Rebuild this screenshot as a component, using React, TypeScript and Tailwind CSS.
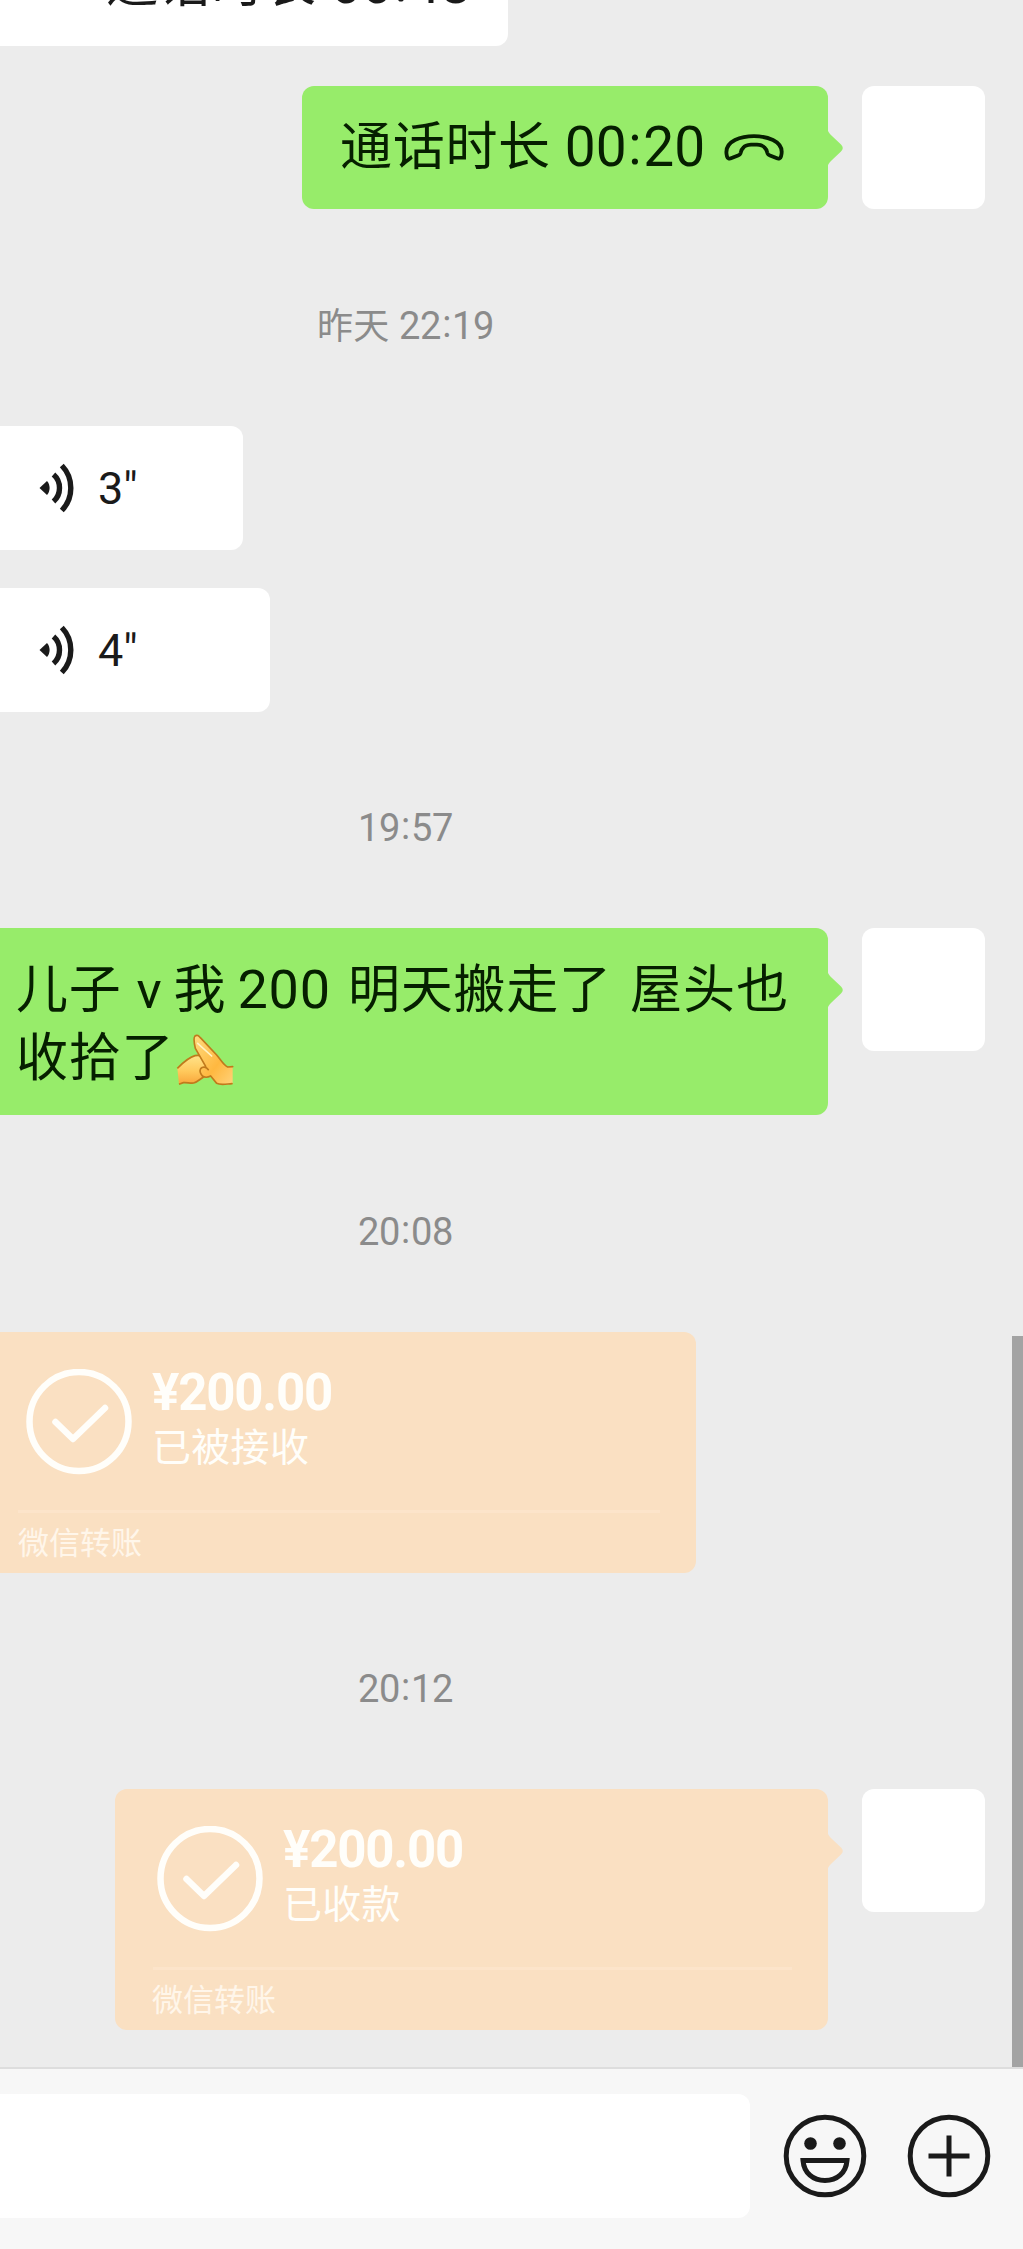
import type { ReactNode } from 'react'
import clsx from 'clsx'

function PhoneIcon() {
  return (
    <svg className="h-[27px] w-[60px] shrink-0" viewBox="0 0 60 27" fill="none">
      <path
        d="M3 22.5C1 15 4 9.500 11 6C22 .9 38 .9 49 6C56 9.500 59.200 15 57 22.500C56.500 24.500 54.500 25 53 24.300L46 21.500C44.500 21 43.500 20 43.200 18.500C42.800 16 42 14.800 40.500 13.500C39.500 12 37 11 33 10.700H27C23 11 20.500 12 19.500 13.500C18 14.800 17.200 16 16.800 18.500C16.500 20 15.500 21 14 21.500L7 24.300C5.500 25 3.500 24.500 3 22.500Z"
        stroke="currentColor"
        strokeWidth="3.8"
        strokeLinejoin="round"
      />
    </svg>
  )
}

function VoiceIcon() {
  return (
    <svg className="h-[50px] w-[36px] shrink-0" viewBox="0 0 36 50" fill="none">
      <path d="M.5 25L8 18C11.500 22 11.500 28 8 32Z" fill="currentColor" />
      <path d="M14.500 11.500C22.500 18.500 22.500 31.500 14.500 38.500" stroke="currentColor" strokeWidth="5.4" />
      <path d="M22.800 2.500C34.800 15 34.800 35 22.800 47.500" stroke="currentColor" strokeWidth="5.4" />
    </svg>
  )
}

function CheckIcon() {
  return (
    <svg className="h-[106px] w-[106px] shrink-0" viewBox="0 0 106 106" fill="none">
      <circle cx="53" cy="52.500" r="49.500" stroke="currentColor" strokeWidth="6.500" />
      <path d="M29.500 53L47 70L79 39" stroke="currentColor" strokeWidth="6.500" strokeLinejoin="round" strokeLinecap="round" />
    </svg>
  )
}

function HandsEmoji() {
  return (
    <svg className="ml-[2px] inline-block h-[52px] w-[58px] align-[-10px]" viewBox="35 36 174 156">
      <defs>
        <linearGradient id="skin" x1="0" y1="0" x2="0" y2="1">
          <stop offset="0" stopColor="#ffe38a" />
          <stop offset="0.55" stopColor="#ffc95c" />
          <stop offset="1" stopColor="#f9a53a" />
        </linearGradient>
        <linearGradient id="arm" x1="0" y1="0" x2="1" y2="1">
          <stop offset="0" stopColor="#ffdc80" />
          <stop offset="0.6" stopColor="#ffb840" />
          <stop offset="1" stopColor="#ffd27a" />
        </linearGradient>
      </defs>
      <path
        d="M39 139C55 123 72 106 92 101C112 96 130 106 136 130C142 150 138 164 124 166C108 172 98 181 84 184L57 182L44 187Z"
        fill="url(#skin)"
      />
      <path
        d="M39 139C55 123 72 106 92 101C104 98 116 102 126 110M44 187L57 182C68 181 76 184 88 183C100 180 108 170 118 165"
        fill="none"
        stroke="#c07a1c"
        strokeWidth="5"
      />
      <path
        d="M92 42C98 37 104 42 108 47L157 99C170 114 178 130 190 135L205 134V185C189 188 168 190 157 184L139 162C131 166 121 167 114 162C108 155 105 147 109 140C112 136 118 133 124 135L93 79C90 66 86 48 92 42Z"
        fill="url(#arm)"
      />
      <path
        d="M205 134L190 135C178 130 170 114 157 99L108 47C104 42 98 37 92 42C86 48 90 66 93 79L124 133"
        fill="none"
        stroke="#c07a1c"
        strokeWidth="5"
        strokeLinecap="round"
        strokeLinejoin="round"
      />
      <path
        d="M132 143C126 134 115 133 109 140C105 147 108 155 114 162C121 167 131 166 139 162L157 184C168 190 186 186 203 185"
        fill="none"
        stroke="#c07a1c"
        strokeWidth="5"
        strokeLinecap="round"
      />
      <path d="M100 64L142 102" fill="none" stroke="#fff3c4" strokeWidth="5" strokeLinecap="round" />
    </svg>
  )
}

function SmileIcon() {
  return (
    <svg className="h-[84px] w-[84px] shrink-0" viewBox="0 0 84 84" fill="none">
      <circle cx="42" cy="42" r="38.800" stroke="currentColor" strokeWidth="5" />
      <circle cx="27.500" cy="29.500" r="6.300" fill="currentColor" />
      <circle cx="56.500" cy="29.500" r="6.300" fill="currentColor" />
      <path d="M20 46.500H64C63 59 54 66.500 42 66.500C30 66.500 21 59 20 46.500Z" stroke="currentColor" strokeWidth="5" />
    </svg>
  )
}

function PlusIcon() {
  return (
    <svg className="h-[84px] w-[84px] shrink-0" viewBox="0 0 84 84" fill="none">
      <circle cx="42" cy="42" r="38.800" stroke="currentColor" strokeWidth="5" />
      <path d="M42 21.500V62.500M21.500 42H62.500" stroke="currentColor" strokeWidth="5" />
    </svg>
  )
}

function Tail({ className }: { className: string }) {
  return (
    <svg className={clsx('absolute top-[41px] -right-[15px] h-[42px] w-[16px]', className)} viewBox="0 0 16 42">
      <path d="M0 0C.5 4 2 6.500 5 9L14 17.500C16.300 20 16.300 22 14 24.500L5 33C2 35.500 .5 38 0 42Z" fill="currentColor" />
    </svg>
  )
}

function Avatar() {
  return <div className="ml-[34px] h-[123px] w-[123px] shrink-0 rounded-[12px] bg-white" />
}

// mm:ss or hh:mm with the colon lifted to the middle of the digits
function Clock({ value }: { value: string }) {
  const [left, right] = value.split(':')
  return (
    <>
      {left}
      <span className="relative -top-[0.05em] px-[0.03em]">:</span>
      {right}
    </>
  )
}

function Timestamp({ className, children }: { className: string; children: ReactNode }) {
  return (
    <div
      className={clsx('w-[811px] text-center text-[38px] leading-[40px] tracking-[-0.4px] text-[#8b8b8b]', className)}
    >
      {children}
    </div>
  )
}

function VoiceMessage({ seconds, className }: { seconds: number; className: string }) {
  return (
    <div className={clsx('flex h-[124px] items-center rounded-r-[12px] bg-white pl-[39px] text-[#1a1a1a]', className)}>
      <VoiceIcon />
      <span className="mt-[2px] ml-[23px] text-[45px]">{seconds}"</span>
    </div>
  )
}

interface TransferProps {
  status: string
  className: string
  sent?: boolean
}

function Transfer({ status, className, sent }: TransferProps) {
  return (
    <div className={clsx('relative h-[241px] bg-[#fae0c2] text-[#fffefa]', className)}>
      <div className={clsx('flex pt-[37px]', sent ? 'pl-[42px]' : 'pl-[26px]')}>
        <CheckIcon />
        <div className="ml-[20px]">
          <div className="mt-px text-[51px] leading-[46px] font-bold tracking-[-1.2px]">¥200.00</div>
          <div className="mt-[12px] text-[39px] leading-[40px] tracking-[0.3px]">{status}</div>
        </div>
      </div>
      <div className={clsx('mt-[35px] mr-[36px] h-[3px] bg-[#fce4ca]', sent ? 'ml-[38px]' : 'ml-[18px]')} />
      <div
        className={clsx('mt-[11px] text-[31px] leading-[40px] text-[#fff6ea]', sent ? 'ml-[37px]' : 'ml-[18px]')}
      >
        微信转账
      </div>
      {sent && <Tail className="text-[#fae0c2]" />}
    </div>
  )
}

export default function App() {
  return (
    <div className="flex h-[2249px] w-[1023px] flex-col overflow-hidden bg-[#ececec] font-[Roboto,'Noto_Sans_CJK_SC',sans-serif]">
      <main className="relative h-[2067px] shrink-0 overflow-hidden">
        <div className="-mt-[77px] flex h-[123px] w-[508px] items-center rounded-r-[12px] bg-white pl-[32px] text-[52px] text-[#1a1a1a]">
          <PhoneIcon />
          <span className="ml-[14px] tracking-[0.7px]">通话时长</span>
          <span className="ml-[14px] text-[55px]">
            <Clock value="00:48" />
          </span>
        </div>

        <div className="mt-[40px] flex justify-end pr-[38px]">
          <div className="relative flex h-[123px] w-[526px] items-center rounded-[12px] bg-[#97ec6a] pl-[38px] text-[52px] text-[#061f00]">
            <span className="tracking-[0.7px]">通话时长</span>
            <span className="ml-[14px] text-[55px]">
              <Clock value="00:20" />
            </span>
            <span className="ml-[19px]">
              <PhoneIcon />
            </span>
            <Tail className="text-[#97ec6a]" />
          </div>
          <Avatar />
        </div>

        <Timestamp className="mt-[97px]">
          <span className="text-[36px] tracking-[0.4px]">昨天 </span> <Clock value="22:19" />
        </Timestamp>

        <VoiceMessage seconds={3} className="mt-[79px] w-[243px]" />
        <VoiceMessage seconds={4} className="mt-[38px] w-[270px]" />

        <Timestamp className="mt-[96px]">
          <Clock value="19:57" />
        </Timestamp>

        <div className="mt-[80px] flex justify-end pr-[38px]">
          <div className="relative h-[187px] w-[828px] rounded-r-[12px] bg-[#97ec6a] pt-[27px] pl-[16px] text-[52px] leading-[69px] text-[#061f00]">
            <div className="flex h-[69px] items-baseline tracking-[0.8px] whitespace-nowrap">
              <span>儿子</span>
              <span className="ml-[15px]">v</span>
              <span className="ml-[11px]">我</span>
              <span className="ml-[11px] text-[54px]">200</span>
              <span className="ml-[17px]">明天搬走了</span>
              <span className="ml-[18px] tracking-[1.2px]">屋头也</span>
            </div>
            <div className="h-[69px] tracking-[0.7px] whitespace-nowrap">
              收拾了
              <HandsEmoji />
            </div>
            <Tail className="text-[#97ec6a]" />
          </div>
          <Avatar />
        </div>

        <Timestamp className="mt-[97px]">
          <Clock value="20:08" />
        </Timestamp>

        <Transfer status="已被接收" className="mt-[80px] w-[696px] rounded-r-[12px]" />

        <Timestamp className="mt-[96px]">
          <Clock value="20:12" />
        </Timestamp>

        <div className="mt-[80px] flex justify-end pr-[38px]">
          <Transfer status="已收款" className="w-[713px] rounded-[12px]" sent />
          <Avatar />
        </div>

        <div className="absolute top-[1336px] right-0 h-[731px] w-[11px] bg-[#a3a3a3]" />
      </main>

      <footer className="flex flex-1 items-start border-t-2 border-[#dddddd] bg-[#f7f7f7] pt-[25px] text-[#1a1a1a]">
        <div className="h-[124px] w-[750px] rounded-r-[12px] bg-white" />
        <div className="mt-[20px] ml-[33px] flex gap-[40px]">
          <SmileIcon />
          <PlusIcon />
        </div>
      </footer>
    </div>
  )
}
